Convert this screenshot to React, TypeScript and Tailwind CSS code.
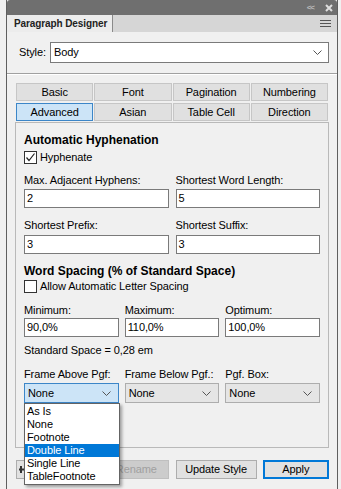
import React from 'react';

const font = "font-['Liberation_Sans',Arial,sans-serif]";

const Chevron: React.FC<{ className?: string }> = ({ className }) => (
  <svg width="9" height="5" viewBox="0 0 9 5" className={className}>
    <path d="M0.5 0.5 L4.5 4.5 L8.5 0.5" fill="none" stroke="#555" strokeWidth="1" />
  </svg>
);

const Label: React.FC<{ children: React.ReactNode; className?: string }> = ({ children, className = '' }) => (
  <div className={`h-[13px] leading-[13px] whitespace-nowrap ${className}`}>{children}</div>
);

const TextBox: React.FC<{ value: string; className?: string }> = ({ value, className = '' }) => (
  <div className={`h-[19px] bg-white border border-[#7a7a7a] px-[2px] leading-[17px] ${className}`}>{value}</div>
);

const CheckBox: React.FC<{ checked?: boolean; label: string }> = ({ checked, label }) => (
  <div className="flex items-center h-[13px] gap-[3px]">
    <div className="w-[13px] h-[13px] border border-[#333] bg-white flex items-center justify-center">
      {checked && (
        <svg width="11" height="11" viewBox="0 0 11 11">
          <path d="M1.5 5.5 L4 8.5 L9.5 1.5" fill="none" stroke="#222" strokeWidth="1.2" />
        </svg>
      )}
    </div>
    <span className="leading-[13px]">{label}</span>
  </div>
);

const Tab: React.FC<{ label: string; active?: boolean }> = ({ label, active }) => (
  <div
    className={`h-[18px] flex items-center justify-center border ${
      active ? 'bg-[#cce4f7] border-[#3c86c8]' : 'bg-[#e0e0e0] border-[#c6c6c6]'
    }`}
  >
    {label}
  </div>
);

const Select: React.FC<{ value: string; open?: boolean }> = ({ value, open }) => (
  <div
    className={`h-[20px] flex items-center justify-between pl-[3px] pr-[7px] border ${
      open ? 'bg-[#cce4f7] border-[#3c86c8]' : 'bg-[#e5e5e5] border-[#adadad]'
    }`}
  >
    <span>{value}</span>
    <Chevron />
  </div>
);

const options = ['As Is', 'None', 'Footnote', 'Double Line', 'Single Line', 'TableFootnote'];

export default function App() {
  return (
    <div className={`relative w-[341px] h-[489px] overflow-hidden bg-[#f0f0f0] text-[11px] tracking-[-0.1px] text-black ${font}`}>
      <div className="ml-[6px] w-[332px] h-full flex flex-col border-x border-[#5f5f5f]">
        {/* title bar */}
        <div className="h-[15px] bg-[#6f6f6f] rounded-tl-[3px] rounded-tr-[3px] flex items-center justify-end pr-[4px] gap-[11px] shrink-0">
          <span className="text-[8px] font-bold text-[#b8b8b8] tracking-[-1px] leading-none">&lt;&lt;</span>
          <svg width="8" height="8" viewBox="0 0 8 8">
            <path d="M1 1 L7 7 M7 1 L1 7" stroke="#dedede" strokeWidth="2" />
          </svg>
        </div>

        {/* panel tab strip */}
        <div className="h-[17px] bg-[#d6d6d6] flex items-stretch justify-between shrink-0">
          <div className="w-[106px] bg-[#ececec] border-r border-[#8a8a8a] flex items-center pl-[7px] font-bold text-[10px] tracking-[-0.1px] text-[#222]">
            Paragraph Designer
          </div>
          <div className="flex flex-col justify-center gap-[2px] pr-[6px]">
            <div className="w-[11px] h-[1px] bg-[#555]" />
            <div className="w-[11px] h-[1px] bg-[#555]" />
            <div className="w-[11px] h-[1px] bg-[#555]" />
          </div>
        </div>

        {/* body */}
        <div className="flex-1 flex flex-col">
          <div className="flex items-center pt-[10px] pl-[12px] pr-[8px] gap-[4px]">
            <span>Style:</span>
            <div className="flex-1 h-[21px] bg-white border border-[#7a7a7a] flex items-center justify-between pl-[3px] pr-[6px]">
              <span>Body</span>
              <Chevron />
            </div>
          </div>

          <div className="mt-[10px] h-[1px] bg-[#a0a0a0]" />
          <div className="h-[1px] bg-white" />

          {/* tabs */}
          <div className="mt-[8px] pl-[9px] pr-[9px] grid grid-cols-4 gap-x-[1px] gap-y-[2px]">
            <Tab label="Basic" />
            <Tab label="Font" />
            <Tab label="Pagination" />
            <Tab label="Numbering" />
            <Tab label="Advanced" active />
            <Tab label="Asian" />
            <Tab label="Table Cell" />
            <Tab label="Direction" />
          </div>

          {/* tab page */}
          <div className="mt-[1px] ml-[8px] mr-[8px] h-[326px] border border-[#b9b9b9] pl-[8px] pr-[8px] flex flex-col">
            <Label className="mt-[11px] font-bold text-[12px] tracking-normal">Automatic Hyphenation</Label>
            <div className="mt-[4px]">
              <CheckBox checked label="Hyphenate" />
            </div>

            <div className="mt-[10px] grid grid-cols-2 gap-x-[7px] w-[296px]">
              <Label>Max. Adjacent Hyphens:</Label>
              <Label>Shortest Word Length:</Label>
              <TextBox value="2" className="mt-[2px]" />
              <TextBox value="5" className="mt-[2px]" />
            </div>

            <div className="mt-[11px] grid grid-cols-2 gap-x-[7px] w-[296px]">
              <Label>Shortest Prefix:</Label>
              <Label>Shortest Suffix:</Label>
              <TextBox value="3" className="mt-[3px]" />
              <TextBox value="3" className="mt-[3px]" />
            </div>

            <Label className="mt-[11px] font-bold text-[12px] tracking-normal">Word Spacing (% of Standard Space)</Label>
            <div className="mt-[2px]">
              <CheckBox label="Allow Automatic Letter Spacing" />
            </div>

            <div className="mt-[11px] grid grid-cols-3 gap-x-[6px] w-[296px]">
              <Label>Minimum:</Label>
              <Label>Maximum:</Label>
              <Label>Optimum:</Label>
              <TextBox value="90,0%" className="mt-[1px]" />
              <TextBox value="110,0%" className="mt-[1px]" />
              <TextBox value="100,0%" className="mt-[1px]" />
            </div>

            <Label className="mt-[7px]">Standard Space = 0,28 em</Label>

            <div className="mt-[11px] grid grid-cols-3 gap-x-[6px] w-[296px]">
              <Label>Frame Above Pgf:</Label>
              <Label>Frame Below Pgf.:</Label>
              <Label>Pgf. Box:</Label>
              <div className="mt-[2px]"><Select value="None" open /></div>
              <div className="mt-[2px]"><Select value="None" /></div>
              <div className="mt-[2px]"><Select value="None" /></div>
            </div>
          </div>

          {/* buttons */}
          <div className="mt-[12px] flex pl-[9px] pr-[8px] gap-[4px]">
            <div className="w-[85px] h-[19px] bg-[#e1e1e1] border border-[#adadad] flex items-center pl-[2px]">
              <svg width="5" height="9" viewBox="0 0 5 9">
                <path d="M0 4.5 H5 M2 1 V8" stroke="#333" strokeWidth="2" />
              </svg>
            </div>
            <div className="w-[65px] h-[19px] bg-[#cccccc] border border-[#bfbfbf] flex items-center justify-center text-[#a0a0a0]">
              Rename
            </div>
            <div className="ml-[3px] w-[82px] h-[19px] bg-[#e1e1e1] border border-[#adadad] flex items-center justify-center">
              Update Style
            </div>
            <div className="ml-[2px] w-[67px] h-[19px] bg-[#e1e1e1] border-2 border-[#0078d7] flex items-center justify-center">
              Apply
            </div>
          </div>
        </div>
      </div>

      {/* open dropdown list */}
      <div className="absolute left-[24px] top-[403px] w-[96px] bg-white border border-[#646464] shadow-[2px_2px_3px_rgba(0,0,0,0.35)] py-[1px]">
        {options.map((o) => (
          <div
            key={o}
            className={`h-[13px] leading-[13px] pl-[2px] ${o === 'Double Line' ? 'bg-[#0078d7] text-white' : ''}`}
          >
            {o}
          </div>
        ))}
      </div>
    </div>
  );
}
